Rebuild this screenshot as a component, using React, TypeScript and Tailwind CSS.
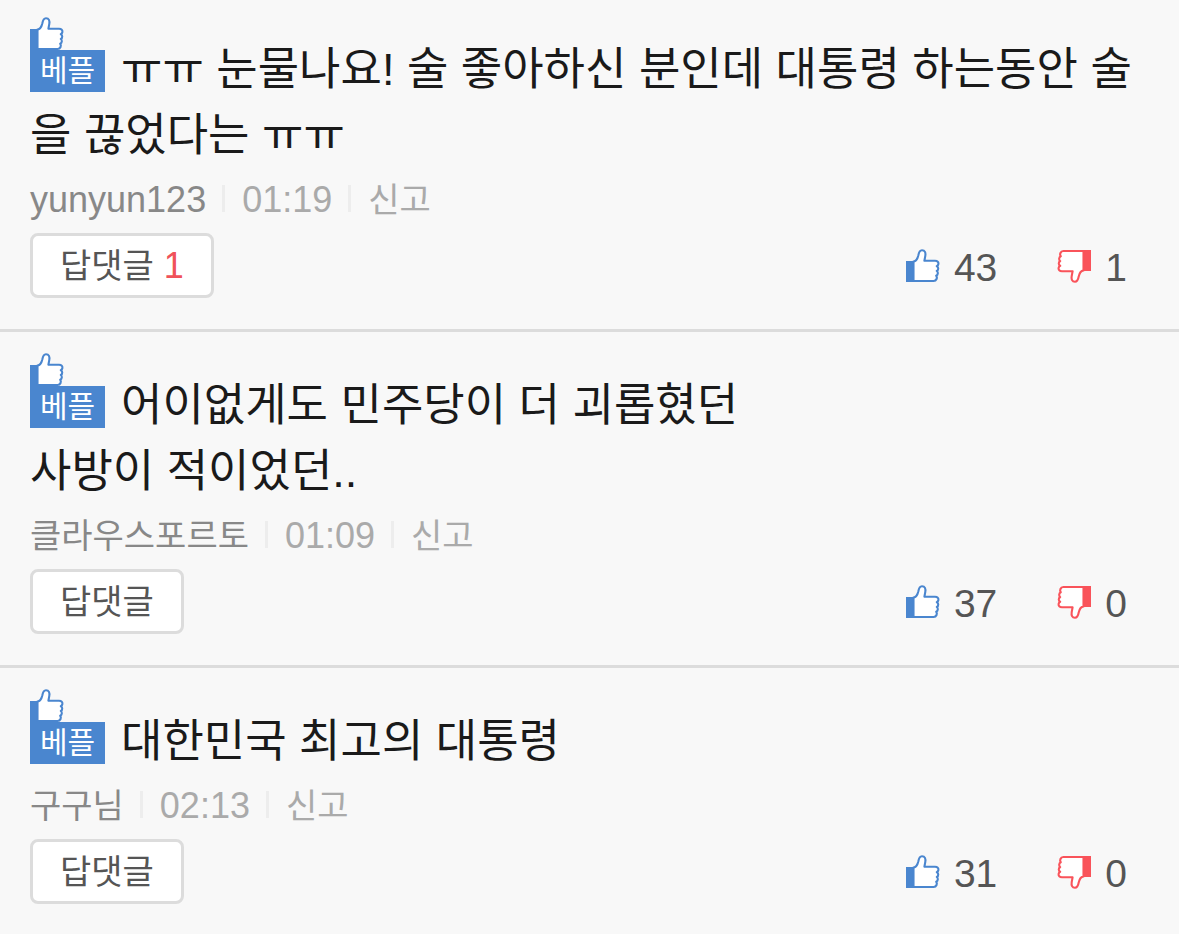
import { useState } from "react";

type Comment = {
  id: number;
  lines: string[];
  author: string;
  time: string;
  replies: number;
  likes: number;
  dislikes: number;
};

const comments: Comment[] = [
  {
    id: 1,
    lines: ["ㅠㅠ 눈물나요! 술 좋아하신 분인데 대통령 하는동안 술을 끊었다는 ㅠㅠ"],
    author: "yunyun123",
    time: "01:19",
    replies: 1,
    likes: 43,
    dislikes: 1,
  },
  {
    id: 2,
    lines: ["어이없게도 민주당이 더 괴롭혔던", "사방이 적이었던.."],
    author: "클라우스포르토",
    time: "01:09",
    replies: 0,
    likes: 37,
    dislikes: 0,
  },
  {
    id: 3,
    lines: ["대한민국 최고의 대통령"],
    author: "구구님",
    time: "02:13",
    replies: 0,
    likes: 31,
    dislikes: 0,
  },
];

const HAND =
  "M7.5 12.6C10.4 12.2 11.6 9.5 12.3 6.5C12.8 3.6 13.2 1.2 16 1.2C19 1.2 19.8 3.8 19.3 6.8L18.4 11.8H29C31.5 11.8 32.7 13.2 32.4 15C32.2 16.3 31.6 16.8 30.8 17.2C32.6 18 32.8 20.8 30.8 22C32.3 23 32.2 25.8 30.2 26.8C31.6 28.4 30.6 32 27.6 32H7.5Z";

function Thumb({ className }: { className: string }) {
  return (
    <svg viewBox="0 0 34 34" className={`size-[34px] ${className}`} aria-hidden="true">
      <path d="M0 12H8V33H0Z" fill="currentColor" />
      <path d={HAND} fill="white" stroke="currentColor" strokeWidth="2.1" strokeLinejoin="round" />
    </svg>
  );
}

function BestBadge() {
  return (
    <span className="relative mr-4 inline-block h-[42px] w-[75px] bg-[#4a86cf] text-center align-[4px] text-[30px] leading-[42px] text-white">
      <Thumb className="absolute bottom-full left-0 -mb-px text-[#4a86cf]" />
      베플
    </span>
  );
}

function Divider() {
  return <span className="mr-[17px] mb-1 ml-4 h-[27px] w-[3px] bg-[#ededed]" />;
}

function CommentItem({ comment }: { comment: Comment }) {
  const [vote, setVote] = useState<"like" | "dislike" | null>(null);
  const hangulName = /[가-힣]/.test(comment.author);

  return (
    <li className="border-b-[3px] border-[#dcdcdc] px-[30px] pt-[41px] pb-[31px] first:pt-[37px] last:border-b-0">
      <p className="text-[45px] leading-[66px] break-all text-[#1a1a1a]">
        <BestBadge />
        {comment.lines.map((line, i) => (
          <span key={line}>
            {i > 0 && <br />}
            {line}
          </span>
        ))}
      </p>
      <div className="mb-0.5 flex h-[62px] items-center leading-[60px]">
        <span className={`text-[#888] ${hangulName ? "text-[34px]" : "text-[36px]"}`}>{comment.author}</span>
        <Divider />
        <time className="text-[36px] text-[#aaa]">{comment.time}</time>
        <Divider />
        <button type="button" className="text-[34px] text-[#aaa]">
          신고
        </button>
      </div>
      <div className="flex items-center justify-between">
        <button
          type="button"
          className="flex h-[65px] items-center gap-2.5 rounded-lg border-[3px] border-[#dcdcdc] bg-white px-[27px] text-[34px] leading-[60px] text-[#555]"
        >
          답댓글
          {comment.replies > 0 && <span className="text-[36px] text-[#f0525a]">{comment.replies}</span>}
        </button>
        <div className="flex gap-[60px] pr-[22px] text-[39px] leading-[60px] text-[#555]">
          <button
            type="button"
            aria-label="공감"
            aria-pressed={vote === "like"}
            onClick={() => setVote(vote === "like" ? null : "like")}
            className="flex items-center gap-3.5"
          >
            <Thumb className="text-[#4a86cf]" />
            <span className="pt-1">{comment.likes + (vote === "like" ? 1 : 0)}</span>
          </button>
          <button
            type="button"
            aria-label="비공감"
            aria-pressed={vote === "dislike"}
            onClick={() => setVote(vote === "dislike" ? null : "dislike")}
            className="flex items-center gap-3.5"
          >
            <Thumb className="rotate-180 text-[#f9535a]" />
            <span className="pt-1">{comment.dislikes + (vote === "dislike" ? 1 : 0)}</span>
          </button>
        </div>
      </div>
    </li>
  );
}

export default function App() {
  return (
    <main className="min-h-screen bg-[#f8f8f8] font-['Liberation_Sans','Noto_Sans_CJK_KR',sans-serif]">
      <ul>
        {comments.map((comment) => (
          <CommentItem key={comment.id} comment={comment} />
        ))}
      </ul>
    </main>
  );
}
